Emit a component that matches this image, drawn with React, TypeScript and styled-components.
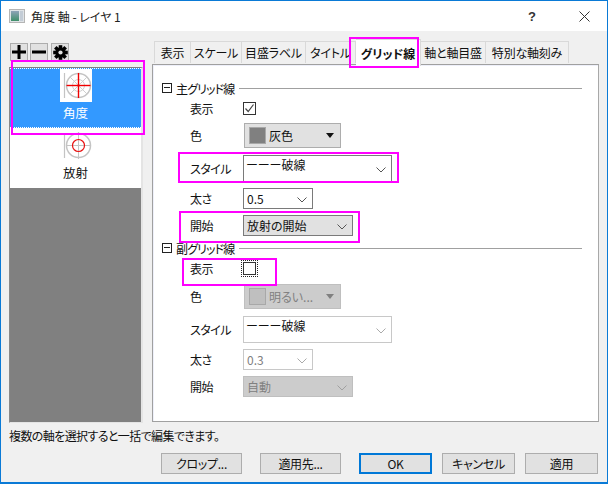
import React from 'react';
import styled, { createGlobalStyle } from 'styled-components';

const Global = createGlobalStyle`
  html, body { margin: 0; padding: 0; background: #f0f0f0; }
  * { box-sizing: border-box; font-feature-settings: "palt"; }
  body { font-family: "Noto Sans CJK JP", "Noto Sans", sans-serif; font-size: 12px; color: #111; }
`;

const Window = styled.div`
  position: relative;
  width: 608px;
  height: 484px;
  border: 1px solid #0a7ad6;
  border-bottom-width: 2px;
  background: #f0f0f0;
  display: flex;
  flex-direction: column;
  overflow: hidden;
`;

const TitleBar = styled.div`
  height: 30px;
  flex: none;
  background: #fff;
  display: flex;
  align-items: center;
  padding-left: 8px;
  gap: 6px;
`;

const TitleText = styled.span`
  font-size: 12px;
  color: #222;
  flex: 1;
`;

const TitleButton = styled.span`
  width: 46px;
  height: 30px;
  display: flex;
  align-items: center;
  justify-content: center;
  font-family: "Liberation Sans", sans-serif;
  font-weight: bold;
  font-size: 13px;
  color: #333;
`;

const Main = styled.div`
  display: flex;
  padding: 10px 8px 0 8px;
  gap: 9px;
  height: 392px;
  flex: none;
`;

const Side = styled.div`
  width: 134px;
  flex: none;
  display: flex;
  flex-direction: column;
`;

const ToolRow = styled.div`
  display: flex;
  gap: 2px;
  padding: 2px 0 0 1px;
  height: 26px;
`;

const ToolButton = styled.button<{ $extra?: boolean }>`
  width: 18px;
  height: 18px;
  padding: 0;
  border: 1px solid #adadad;
  background: #e1e1e1;
  display: flex;
  align-items: center;
  justify-content: center;
  margin-right: ${(p) => (p.$extra ? '1px' : '0')};
`;

const List = styled.div`
  flex: 1;
  display: flex;
  flex-direction: column;
  background: #808080;
  border-top: 1px solid #808080;
  border-left: 1px solid #8a8a8a;
  border-right: 2px solid #e4e4e4;
  border-bottom: 1px solid #e4e4e4;
`;

const Item = styled.div<{ $selected?: boolean }>`
  height: 60px;
  background: ${(p) => (p.$selected ? '#3399ff' : '#fff')};
  color: ${(p) => (p.$selected ? '#fff' : '#111')};
  border-top: 1px dotted ${(p) => (p.$selected ? '#fff' : 'transparent')};
  border-bottom: 1px dotted ${(p) => (p.$selected ? '#fff' : 'transparent')};
  display: flex;
  flex-direction: column;
  align-items: center;
  font-size: 12.5px;
  line-height: 16px;
`;

const IconBox = styled.div`
  width: 32px;
  height: 33px;
  background: #fff;
  margin-bottom: 3px;
`;

const Right = styled.div`
  flex: 1;
  display: flex;
  flex-direction: column;
  min-width: 0;
`;

const Tabs = styled.div`
  height: 23px;
  display: flex;
  align-items: flex-end;
  padding-left: 2px;
  position: relative;
  z-index: 1;
`;

const Tab = styled.div<{ $w: number; $active?: boolean }>`
  width: ${(p) => p.$w}px;
  height: ${(p) => (p.$active ? '27px' : '22px')};
  margin-bottom: ${(p) => (p.$active ? '-2px' : '1px')};
  background: ${(p) => (p.$active ? '#fff' : '#f0f0f0')};
  border: 1px solid #d9d9d9;
  border-bottom: none;
  border-left: none;
  font-weight: ${(p) => (p.$active ? 700 : 400)};
  font-size: 12px;
  letter-spacing: ${(p) => (p.$active ? '0' : '-0.2px')};
  display: flex;
  align-items: center;
  justify-content: center;
  white-space: nowrap;
  &:first-child { border-left: 1px solid #d9d9d9; }
`;

const Panel = styled.div`
  height: 358px;
  background: #fff;
  border: 1px solid #a0a0a0;
  border-right-color: #a8a8a8;
  box-shadow: inset 1px 1px 0 #eef0fa;
  padding: 15px 16px 0 9px;
  display: flex;
  flex-direction: column;
`;

const SectionHead = styled.div<{ $after: number }>`
  height: 16px;
  display: flex;
  align-items: center;
  gap: 4px;
  font-size: 12px;
  letter-spacing: -0.9px;
  margin-bottom: ${(p) => p.$after}px;
`;

const Fold = styled.span`
  width: 10px;
  height: 10px;
  border: 1px solid #222;
  position: relative;
  flex: none;
  &::after {
    content: '';
    position: absolute;
    left: 1px;
    right: 1px;
    top: 3px;
    height: 1px;
    background: #222;
  }
`;

const Rule = styled.span`
  flex: 1;
  height: 1px;
  background: #a0a0a0;
  margin-left: 1px;
`;

const Row = styled.div<{ $h: number; $after: number }>`
  display: flex;
  align-items: center;
  height: ${(p) => p.$h}px;
  margin-bottom: ${(p) => p.$after}px;
  padding-left: 28px;
`;

const Label = styled.span`
  width: 53px;
  flex: none;
  font-size: 12px;
  letter-spacing: -0.5px;
  color: #111;
`;

const Check = styled.span<{ $focus?: boolean }>`
  width: 13px;
  height: 13px;
  border: 1px solid #333;
  background: #fff;
  display: flex;
  align-items: center;
  justify-content: center;
  outline: ${(p) => (p.$focus ? '1px dotted #222' : 'none')};
  outline-offset: 1px;
`;

const ColorCombo = styled.div<{ $off?: boolean }>`
  width: 97px;
  height: 25px;
  margin-left: 1px;
  background: ${(p) => (p.$off ? '#cccccc' : '#e1e1e1')};
  border: 1px solid ${(p) => (p.$off ? '#bfbfbf' : '#adadad')};
  color: ${(p) => (p.$off ? '#808080' : '#111')};
  display: flex;
  align-items: center;
  padding-left: 4px;
  gap: 3px;
  font-size: 12px;
`;

const Swatch = styled.span<{ $color: string; $border: string }>`
  width: 17px;
  height: 17px;
  background: ${(p) => p.$color};
  border: 1px solid ${(p) => p.$border};
  flex: none;
`;

const ComboArrow = styled.span<{ $off?: boolean }>`
  margin-left: auto;
  margin-right: 6px;
  width: 0;
  height: 0;
  border-left: 4.5px solid transparent;
  border-right: 4.5px solid transparent;
  border-top: 5px solid ${(p) => (p.$off ? '#808080' : '#111')};
`;

const Select = styled.div<{ $w: number; $h: number; $variant: 'white' | 'gray' | 'light' | 'disabled' | 'whiteOff' }>`
  width: ${(p) => p.$w}px;
  height: ${(p) => p.$h}px;
  background: ${(p) =>
    p.$variant === 'gray' ? '#e1e1e1' : p.$variant === 'disabled' ? '#cccccc' : '#fff'};
  border: 1px solid ${(p) =>
    p.$variant === 'white' || p.$variant === 'gray' ? '#7a7a7a' : p.$variant === 'disabled' ? '#bfbfbf' : '#c8c8c8'};
  color: ${(p) => (p.$variant === 'disabled' || p.$variant === 'light' ? '#808080' : '#111')};
  display: flex;
  align-items: ${(p) => (p.$h > 22 ? 'flex-start' : 'center')};
  padding: ${(p) => (p.$h > 22 ? '0 0 0 2px' : '0 0 0 3px')};
  font-size: 12px;
  position: relative;
`;

const Chevron = styled.span`
  position: absolute;
  right: 5px;
  top: 50%;
  margin-top: -2px;
`;

const Status = styled.div`
  height: 21px;
  flex: none;
  padding: 5px 0 0 8px;
  line-height: 16px;
  font-size: 12px;
  letter-spacing: -0.6px;
  color: #111;
`;

const Footer = styled.div`
  display: flex;
  padding: 0 8px 0 160px;
  margin-top: 9px;
`;

const Btn = styled.button<{ $w: number; $after: number; $primary?: boolean }>`
  width: ${(p) => p.$w}px;
  height: 21px;
  margin-right: ${(p) => p.$after}px;
  padding: 0;
  background: #e1e1e1;
  border: ${(p) => (p.$primary ? '2px solid #0078d7' : '1px solid #adadad')};
  font-family: inherit;
  font-size: 12px;
  letter-spacing: -0.3px;
  color: #111;
  line-height: 1;
`;

const Mark = styled.div<{ $x: number; $y: number; $w: number; $h: number }>`
  position: absolute;
  left: ${(p) => p.$x - 1}px;
  top: ${(p) => p.$y - 1}px;
  width: ${(p) => p.$w}px;
  height: ${(p) => p.$h}px;
  border: 2px solid #ff00ff;
  pointer-events: none;
  z-index: 5;
`;

const WindowIcon = () => (
  <svg width="16" height="14" viewBox="0 0 16 14">
    <defs>
      <linearGradient id="wi" x1="0" y1="0" x2="0" y2="1">
        <stop offset="0" stopColor="#8fa3b8" />
        <stop offset="1" stopColor="#3f8f6a" />
      </linearGradient>
    </defs>
    <rect x="0.5" y="0.5" width="15" height="13" fill="#dfe3e6" stroke="#b5b5b5" />
    <rect x="2" y="2" width="8" height="10" fill="url(#wi)" />
    <rect x="11" y="2" width="3" height="10" fill="#c3ccd6" />
  </svg>
);

const Polar = ({ radial }: { radial?: boolean }) => (
  <svg width="32" height="33" viewBox="0 0 32 33">
    <line x1="4.5" y1="4" x2="4.5" y2="29" stroke="#c4c4c4" strokeWidth="1.2" />
    <circle cx="18.5" cy="16.5" r="12" fill="none" stroke="#c4c4c4" strokeWidth="1.5" />
    {radial ? (
      <>
        <line x1="18.5" y1="3" x2="18.5" y2="30" stroke="#c4c4c4" />
        <line x1="6" y1="16.5" x2="31" y2="16.5" stroke="#c4c4c4" />
        <circle cx="18.5" cy="16.5" r="6" fill="none" stroke="#e81010" strokeWidth="1.2" />
      </>
    ) : (
      <>
        <circle cx="18.5" cy="16.5" r="6" fill="none" stroke="#cfcfcf" />
        <line x1="10" y1="8" x2="27" y2="25" stroke="#cfcfcf" />
        <line x1="27" y1="8" x2="10" y2="25" stroke="#cfcfcf" />
        <line x1="18.5" y1="4" x2="18.5" y2="29" stroke="#f00000" strokeWidth="1.4" />
        <line x1="6.5" y1="16.5" x2="30.5" y2="16.5" stroke="#f00000" strokeWidth="1.4" />
      </>
    )}
  </svg>
);

const Gear = () => (
  <svg width="15" height="15" viewBox="0 0 15 15">
    <g fill="#000">
      {[0, 45, 90, 135].map((a) => (
        <rect key={a} x="5.7" y="0.2" width="3.6" height="14.6" transform={`rotate(${a} 7.5 7.5)`} />
      ))}
    </g>
    <circle cx="7.5" cy="7.5" r="4" fill="none" stroke="#000" strokeWidth="2.4" />
    <circle cx="7.5" cy="7.5" r="2.1" fill="#e1e1e1" />
  </svg>
);

const Tick = () => (
  <svg width="11" height="11" viewBox="0 0 11 11">
    <path d="M1.5 5.5 L4.2 8.5 L9.5 1.5" fill="none" stroke="#444" strokeWidth="1.2" />
  </svg>
);

const Down = ({ color = '#555' }: { color?: string }) => (
  <svg width="10" height="6" viewBox="0 0 10 6" style={{ display: 'block' }}>
    <path d="M0.5 0.5 L5 5 L9.5 0.5" fill="none" stroke={color} />
  </svg>
);

const tabs: [string, number][] = [
  ['表示', 37],
  ['スケール', 51],
  ['目盛ラベル', 64],
  ['タイトル', 50],
];

export default function App() {
  return (
    <>
      <Global />
      <Window>
        <TitleBar>
          <WindowIcon />
          <TitleText>角度 軸 - レイヤ 1</TitleText>
          <TitleButton>?</TitleButton>
          <TitleButton>
            <svg width="11" height="11" viewBox="0 0 11 11">
              <path d="M0.5 0.5 L10.5 10.5 M10.5 0.5 L0.5 10.5" stroke="#333" strokeWidth="1" />
            </svg>
          </TitleButton>
        </TitleBar>
        <Main>
          <Side>
            <ToolRow>
              <ToolButton>
                <svg width="14" height="14" viewBox="0 0 14 14">
                  <path d="M5.5 0 H8.5 V5.5 H14 V8.5 H8.5 V14 H5.5 V8.5 H0 V5.5 H5.5 Z" fill="#000" />
                </svg>
              </ToolButton>
              <ToolButton $extra>
                <svg width="14" height="14" viewBox="0 0 14 14">
                  <rect x="0" y="5.5" width="14" height="3" fill="#000" />
                </svg>
              </ToolButton>
              <ToolButton>
                <Gear />
              </ToolButton>
            </ToolRow>
            <List>
              <Item $selected>
                <IconBox>
                  <Polar />
                </IconBox>
                角度
              </Item>
              <Item>
                <IconBox>
                  <Polar radial />
                </IconBox>
                放射
              </Item>
            </List>
          </Side>
          <Right>
            <Tabs>
              {tabs.map(([t, w]) => (
                <Tab key={t} $w={w}>{t}</Tab>
              ))}
              <Tab $w={65} $active>グリッド線</Tab>
              <Tab $w={65}>軸と軸目盛</Tab>
              <Tab $w={83}>特別な軸刻み</Tab>
            </Tabs>
            <Panel>
              <SectionHead $after={2}>
                <Fold />
                主グリッド線
                <Rule />
              </SectionHead>
              <Row $h={21} $after={4}>
                <Label>表示</Label>
                <Check><Tick /></Check>
              </Row>
              <Row $h={25} $after={7}>
                <Label>色</Label>
                <ColorCombo>
                  <Swatch $color="#808080" $border="#a8a8a8" />
                  灰色
                  <ComboArrow />
                </ColorCombo>
              </Row>
              <Row $h={27} $after={6}>
                <Label>スタイル</Label>
                <Select $w={149} $h={27} $variant="white">
                  ーーー破線
                  <Chevron><Down /></Chevron>
                </Select>
              </Row>
              <Row $h={21} $after={6}>
                <Label>太さ</Label>
                <Select $w={70} $h={21} $variant="white">
                  0.5
                  <Chevron><Down /></Chevron>
                </Select>
              </Row>
              <Row $h={21} $after={4}>
                <Label>開始</Label>
                <Select $w={110} $h={21} $variant="gray">
                  放射の開始
                  <Chevron><Down /></Chevron>
                </Select>
              </Row>
              <SectionHead $after={2}>
                <Fold />
                副グリッド線
                <Rule />
              </SectionHead>
              <Row $h={21} $after={5}>
                <Label>表示</Label>
                <Check $focus />
              </Row>
              <Row $h={25} $after={7}>
                <Label>色</Label>
                <ColorCombo $off>
                  <Swatch $color="#bfbfbf" $border="#a8a8a8" />
                  明るい...
                  <ComboArrow $off />
                </ColorCombo>
              </Row>
              <Row $h={27} $after={6}>
                <Label>スタイル</Label>
                <Select $w={149} $h={27} $variant="whiteOff">
                  ーーー破線
                  <Chevron><Down color="#aaa" /></Chevron>
                </Select>
              </Row>
              <Row $h={21} $after={6}>
                <Label>太さ</Label>
                <Select $w={70} $h={21} $variant="light">
                  0.3
                  <Chevron><Down color="#aaa" /></Chevron>
                </Select>
              </Row>
              <Row $h={21} $after={0}>
                <Label>開始</Label>
                <Select $w={110} $h={21} $variant="disabled">
                  自動
                  <Chevron><Down color="#a0a0a0" /></Chevron>
                </Select>
              </Row>
            </Panel>
          </Right>
        </Main>
        <Status>複数の軸を選択すると一括で編集できます。</Status>
        <Footer>
          <Btn $w={81} $after={18}>クロップ...</Btn>
          <Btn $w={81} $after={18}>適用先...</Btn>
          <Btn $w={73} $after={10} $primary>OK</Btn>
          <Btn $w={73} $after={10}>キャンセル</Btn>
          <Btn $w={73} $after={0}>適用</Btn>
        </Footer>
        <Mark $x={11} $y={60} $w={134} $h={75} />
        <Mark $x={349} $y={37} $w={70} $h={31} />
        <Mark $x={178} $y={152} $w={221} $h={31} />
        <Mark $x={179} $y={211} $w={181} $h={32} />
        <Mark $x={182} $y={258} $w={95} $h={28} />
      </Window>
    </>
  );
}
